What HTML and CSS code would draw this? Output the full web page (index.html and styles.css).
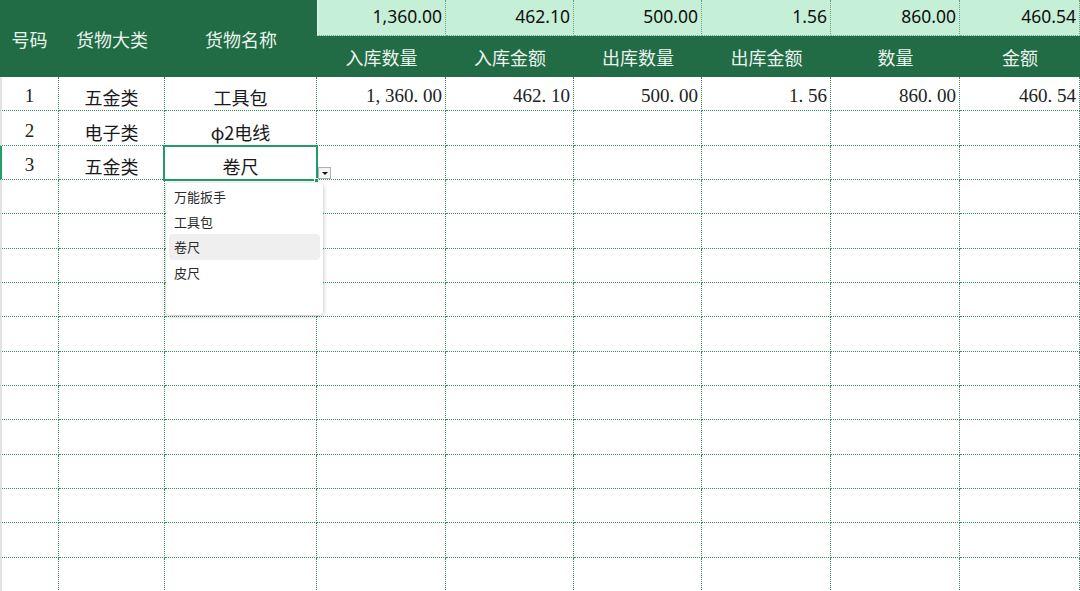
FILE: index.html
```html
<!DOCTYPE html>
<html lang="zh-CN">
<head>
<meta charset="utf-8">
<title>货物台账</title>
<link rel="stylesheet" href="styles.css">
</head>
<body>
<div class="sheet">
  <div class="hd span2">号码</div>
  <div class="hd span2">货物大类</div>
  <div class="hd span2">货物名称</div>
  <div class="sum">1,360.00</div>
  <div class="sum">462.10</div>
  <div class="sum">500.00</div>
  <div class="sum">1.56</div>
  <div class="sum">860.00</div>
  <div class="sum">460.54</div>
  <div class="hd">入库数量</div>
  <div class="hd">入库金额</div>
  <div class="hd">出库数量</div>
  <div class="hd">出库金额</div>
  <div class="hd">数量</div>
  <div class="hd">金额</div>

  <div class="c first no">1</div>
  <div class="c t">五金类</div>
  <div class="c t">工具包</div>
  <div class="c n">1<span class="p">,</span>360<span class="p">.</span>00</div>
  <div class="c n">462<span class="p">.</span>10</div>
  <div class="c n">500<span class="p">.</span>00</div>
  <div class="c n">1<span class="p">.</span>56</div>
  <div class="c n">860<span class="p">.</span>00</div>
  <div class="c n">460<span class="p">.</span>54</div>

  <div class="c first no">2</div>
  <div class="c t">电子类</div>
  <div class="c t">φ2电线</div>
  <div class="c"></div><div class="c"></div><div class="c"></div><div class="c"></div><div class="c"></div><div class="c"></div>

  <div class="c first active no">3</div>
  <div class="c t">五金类</div>
  <div class="c t sel">卷尺
    <span class="frame"></span>
    <span class="handle"></span>
    <span class="arrow"></span>
    <ul class="menu">
      <li>万能扳手</li>
      <li>工具包</li>
      <li class="hover">卷尺</li>
      <li>皮尺</li>
    </ul>
  </div>
  <div class="c"></div><div class="c"></div><div class="c"></div><div class="c"></div><div class="c"></div><div class="c"></div>

  <div class="c first"></div><div class="c"></div><div class="c"></div><div class="c"></div><div class="c"></div><div class="c"></div><div class="c"></div><div class="c"></div><div class="c"></div>
  <div class="c first"></div><div class="c"></div><div class="c"></div><div class="c"></div><div class="c"></div><div class="c"></div><div class="c"></div><div class="c"></div><div class="c"></div>
  <div class="c first"></div><div class="c"></div><div class="c"></div><div class="c"></div><div class="c"></div><div class="c"></div><div class="c"></div><div class="c"></div><div class="c"></div>
  <div class="c first"></div><div class="c"></div><div class="c"></div><div class="c"></div><div class="c"></div><div class="c"></div><div class="c"></div><div class="c"></div><div class="c"></div>
  <div class="c first"></div><div class="c"></div><div class="c"></div><div class="c"></div><div class="c"></div><div class="c"></div><div class="c"></div><div class="c"></div><div class="c"></div>
  <div class="c first"></div><div class="c"></div><div class="c"></div><div class="c"></div><div class="c"></div><div class="c"></div><div class="c"></div><div class="c"></div><div class="c"></div>
  <div class="c first"></div><div class="c"></div><div class="c"></div><div class="c"></div><div class="c"></div><div class="c"></div><div class="c"></div><div class="c"></div><div class="c"></div>
  <div class="c first"></div><div class="c"></div><div class="c"></div><div class="c"></div><div class="c"></div><div class="c"></div><div class="c"></div><div class="c"></div><div class="c"></div>
  <div class="c first"></div><div class="c"></div><div class="c"></div><div class="c"></div><div class="c"></div><div class="c"></div><div class="c"></div><div class="c"></div><div class="c"></div>
  <div class="c first"></div><div class="c"></div><div class="c"></div><div class="c"></div><div class="c"></div><div class="c"></div><div class="c"></div><div class="c"></div><div class="c"></div>
  <div class="c first"></div><div class="c"></div><div class="c"></div><div class="c"></div><div class="c"></div><div class="c"></div><div class="c"></div><div class="c"></div><div class="c"></div>
  <div class="c first"></div><div class="c"></div><div class="c"></div><div class="c"></div><div class="c"></div><div class="c"></div><div class="c"></div><div class="c"></div><div class="c"></div>
</div>
</body>
</html>
```
FILE: styles.css
```css
* { box-sizing: border-box; }
html, body {
  margin: 0;
  padding: 0;
  background: #ffffff;
  overflow: hidden;
}
body {
  width: 1080px;
  height: 591px;
  font-family: "Noto Sans CJK SC", "Noto Sans", sans-serif;
}
.sheet {
  display: grid;
  grid-template-columns: 59px 106px 152px 129px 128px 128px 129px 129px 120px;
  grid-template-rows: 36px 41px;
  grid-auto-rows: 34.35px;
  width: 1080px;
}
.hd {
  background: #216b45;
  color: #eaf4ee;
  font-size: 18px;
  line-height: 18px;
  display: flex;
  align-items: center;
  justify-content: center;
}
.span2 { grid-row: span 2; }
.sum {
  background: #c6efd7;
  color: #0f0f0f;
  font-family: "Noto Sans", "Open Sans", sans-serif;
  font-size: 17.5px;
  line-height: 17px;
  display: flex;
  align-items: center;
  justify-content: flex-end;
  padding: 0 3px 3px 0;
  border-right: 1px dotted #6f9c83;
  border-bottom: 1px dotted #7aa58d;
}
.sheet > .sum:nth-child(4) { border-left: 1px solid #e4f6ea; }
.c {
  border-right: 1px dotted #3a8c61;
  border-bottom: 1px dotted #3a8c61;
  display: flex;
  align-items: flex-end;
  justify-content: center;
  color: #1a1a1a;
}
.first { border-left: 2px solid #e2e2e2; }
.first.active { border-left-color: #21a06a; }
.t {
  font-size: 18px;
  line-height: 18px;
  padding-bottom: 4px;
}
.n, .no {
  font-family: "Liberation Serif", "DejaVu Serif", serif;
  font-size: 19px;
  line-height: 19px;
  padding-bottom: 5px;
  color: #222;
}
.n {
  justify-content: flex-end;
  padding-right: 3px;
}
.no { padding-right: 1px; }
.p {
  display: inline-block;
  width: 0.5em;
  text-align: left;
}
.sel { position: relative; }
.frame {
  position: absolute;
  left: -2px;
  top: -1px;
  right: -2px;
  bottom: -2px;
  border: 2px solid #1f9d69;
  pointer-events: none;
}
.handle {
  position: absolute;
  right: -3px;
  bottom: -4px;
  width: 5px;
  height: 5px;
  background: #1f9d69;
  border: 1px solid #ffffff;
}
.arrow {
  position: absolute;
  left: 153px;
  top: 21px;
  width: 13px;
  height: 12px;
  background: #f4f4f4;
  border: 1px solid #a9b1ba;
}
.arrow::after {
  content: "";
  position: absolute;
  left: 3px;
  top: 4px;
  border-left: 3px solid transparent;
  border-right: 3px solid transparent;
  border-top: 3px solid #111;
}
.menu {
  position: absolute;
  z-index: 3;
  left: 1px;
  top: 37px;
  width: 157px;
  height: 132px;
  margin: 0;
  padding: 1px 3px;
  list-style: none;
  background: #ffffff;
  border-radius: 4px;
  box-shadow: 0 1px 5px rgba(0, 0, 0, 0.28);
  font-size: 13px;
  color: #2a2a2a;
  text-align: left;
}
.menu li {
  height: 25.3px;
  line-height: 25px;
  padding-left: 5px;
  border-radius: 4px;
}
.menu li.hover { background: #efefef; }
```
